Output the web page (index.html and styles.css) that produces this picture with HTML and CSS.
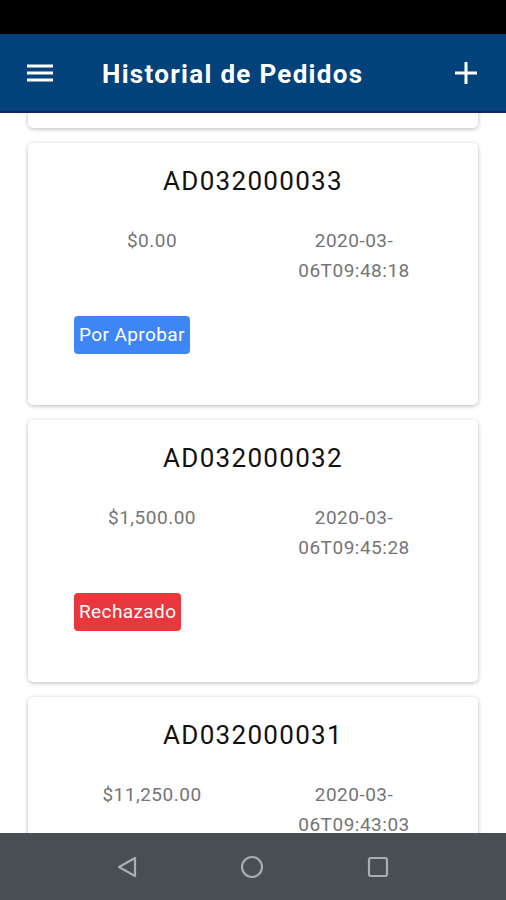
FILE: index.html
```html
<!DOCTYPE html>
<html lang="es">
<head>
    <meta charset="UTF-8">
    <meta name="viewport" content="width=device-width, initial-scale=1.0">
    <title>Historial de Pedidos</title>
    <link rel="stylesheet" href="styles.css">
</head>
<body>
    <div class="phone">
        <div class="status-bar"></div>
        <header class="app-bar">
            <button class="icon-btn" aria-label="Menu">
                <svg width="26" height="20" viewBox="0 0 26 20">
                    <path d="M0 3h26M0 10h26M0 17h26" stroke="#fff" stroke-width="3"/>
                </svg>
            </button>
            <h1 class="app-title">Historial de Pedidos</h1>
            <button class="icon-btn add-btn" aria-label="Nuevo">
                <svg width="24" height="24" viewBox="0 0 24 24">
                    <path d="M12 1v22M1 12h22" stroke="#fff" stroke-width="3"/>
                </svg>
            </button>
        </header>
        <main class="content">
            <div class="order-list">
                <div class="order-card">
                    <h2 class="order-id">AD032000034</h2>
                    <div class="order-row">
                        <div class="order-col">$0.00</div>
                        <div class="order-col">2020-03-<br>06T09:50:02</div>
                    </div>
                    <span class="badge badge-pending">Por Aprobar</span>
                </div>
                <div class="order-card">
                    <h2 class="order-id">AD032000033</h2>
                    <div class="order-row">
                        <div class="order-col">$0.00</div>
                        <div class="order-col">2020-03-<br>06T09:48:18</div>
                    </div>
                    <span class="badge badge-pending">Por Aprobar</span>
                </div>
                <div class="order-card">
                    <h2 class="order-id">AD032000032</h2>
                    <div class="order-row">
                        <div class="order-col">$1,500.00</div>
                        <div class="order-col">2020-03-<br>06T09:45:28</div>
                    </div>
                    <span class="badge badge-rejected">Rechazado</span>
                </div>
                <div class="order-card">
                    <h2 class="order-id">AD032000031</h2>
                    <div class="order-row">
                        <div class="order-col">$11,250.00</div>
                        <div class="order-col">2020-03-<br>06T09:43:03</div>
                    </div>
                    <span class="badge badge-pending">Por Aprobar</span>
                </div>
            </div>
        </main>
        <nav class="nav-bar">
            <svg width="22" height="24" viewBox="0 0 22 24">
                <path d="M19 3 L3 12 L19 21 Z" fill="none" stroke="#a8adb0" stroke-width="2.2" stroke-linejoin="round"/>
            </svg>
            <svg width="24" height="24" viewBox="0 0 24 24">
                <circle cx="12" cy="12" r="10" fill="none" stroke="#a8adb0" stroke-width="2.2"/>
            </svg>
            <svg width="24" height="24" viewBox="0 0 24 24">
                <rect x="3" y="3" width="18" height="18" rx="2" fill="none" stroke="#a8adb0" stroke-width="2.2"/>
            </svg>
        </nav>
    </div>
</body>
</html>
```

FILE: styles.css
```css
body {
    margin: 0;
    padding: 0;
    font-family: Roboto, "Liberation Sans", sans-serif;
    background-color: #fff;
}
.phone {
    width: 506px;
    height: 900px;
    display: flex;
    flex-direction: column;
    overflow: hidden;
}
.status-bar {
    height: 34px;
    background-color: #000;
    flex-shrink: 0;
}
.app-bar {
    height: 77px;
    background-color: #03427a;
    border-bottom: 2px solid #1c1f6b;
    display: flex;
    align-items: center;
    padding: 0 28px 0 27px;
    flex-shrink: 0;
}
.icon-btn {
    background: none;
    border: none;
    padding: 0;
    display: flex;
    cursor: pointer;
}
.app-title {
    margin: 2px 0 0 49px;
    flex: 1;
    color: #fff;
    font-size: 26px;
    font-weight: 700;
    letter-spacing: 1.3px;
}
.content {
    flex: 1;
    overflow: hidden;
    background-color: #fff;
}
.order-list {
    margin-top: -247px;
    padding: 0 28px;
    display: flex;
    flex-direction: column;
    gap: 15px;
}
.order-card {
    height: 262px;
    box-sizing: border-box;
    background: #fff;
    border-radius: 5px;
    box-shadow: 0 1px 4px rgba(0, 0, 0, 0.28);
    padding: 23px 23px 0;
}
.order-id {
    margin: 0;
    text-align: center;
    font-size: 26px;
    font-weight: 400;
    line-height: 30px;
    letter-spacing: 1.3px;
    color: #111;
}
.order-row {
    display: flex;
    margin-top: 30px;
}
.order-col {
    flex: 1;
    text-align: center;
    font-size: 19px;
    line-height: 30px;
    letter-spacing: 0.5px;
    color: #757575;
}
.badge {
    display: inline-block;
    margin: 30px 0 0 23px;
    padding: 7px 5px;
    border-radius: 4px;
    color: #fff;
    font-size: 19px;
    line-height: 24px;
    letter-spacing: 0.4px;
}
.badge-pending {
    background-color: #3e86f5;
}
.badge-rejected {
    background-color: #e8383d;
}
.nav-bar {
    height: 67px;
    background-color: #474f54;
    display: flex;
    align-items: center;
    justify-content: center;
    gap: 102px;
    flex-shrink: 0;
}
```
